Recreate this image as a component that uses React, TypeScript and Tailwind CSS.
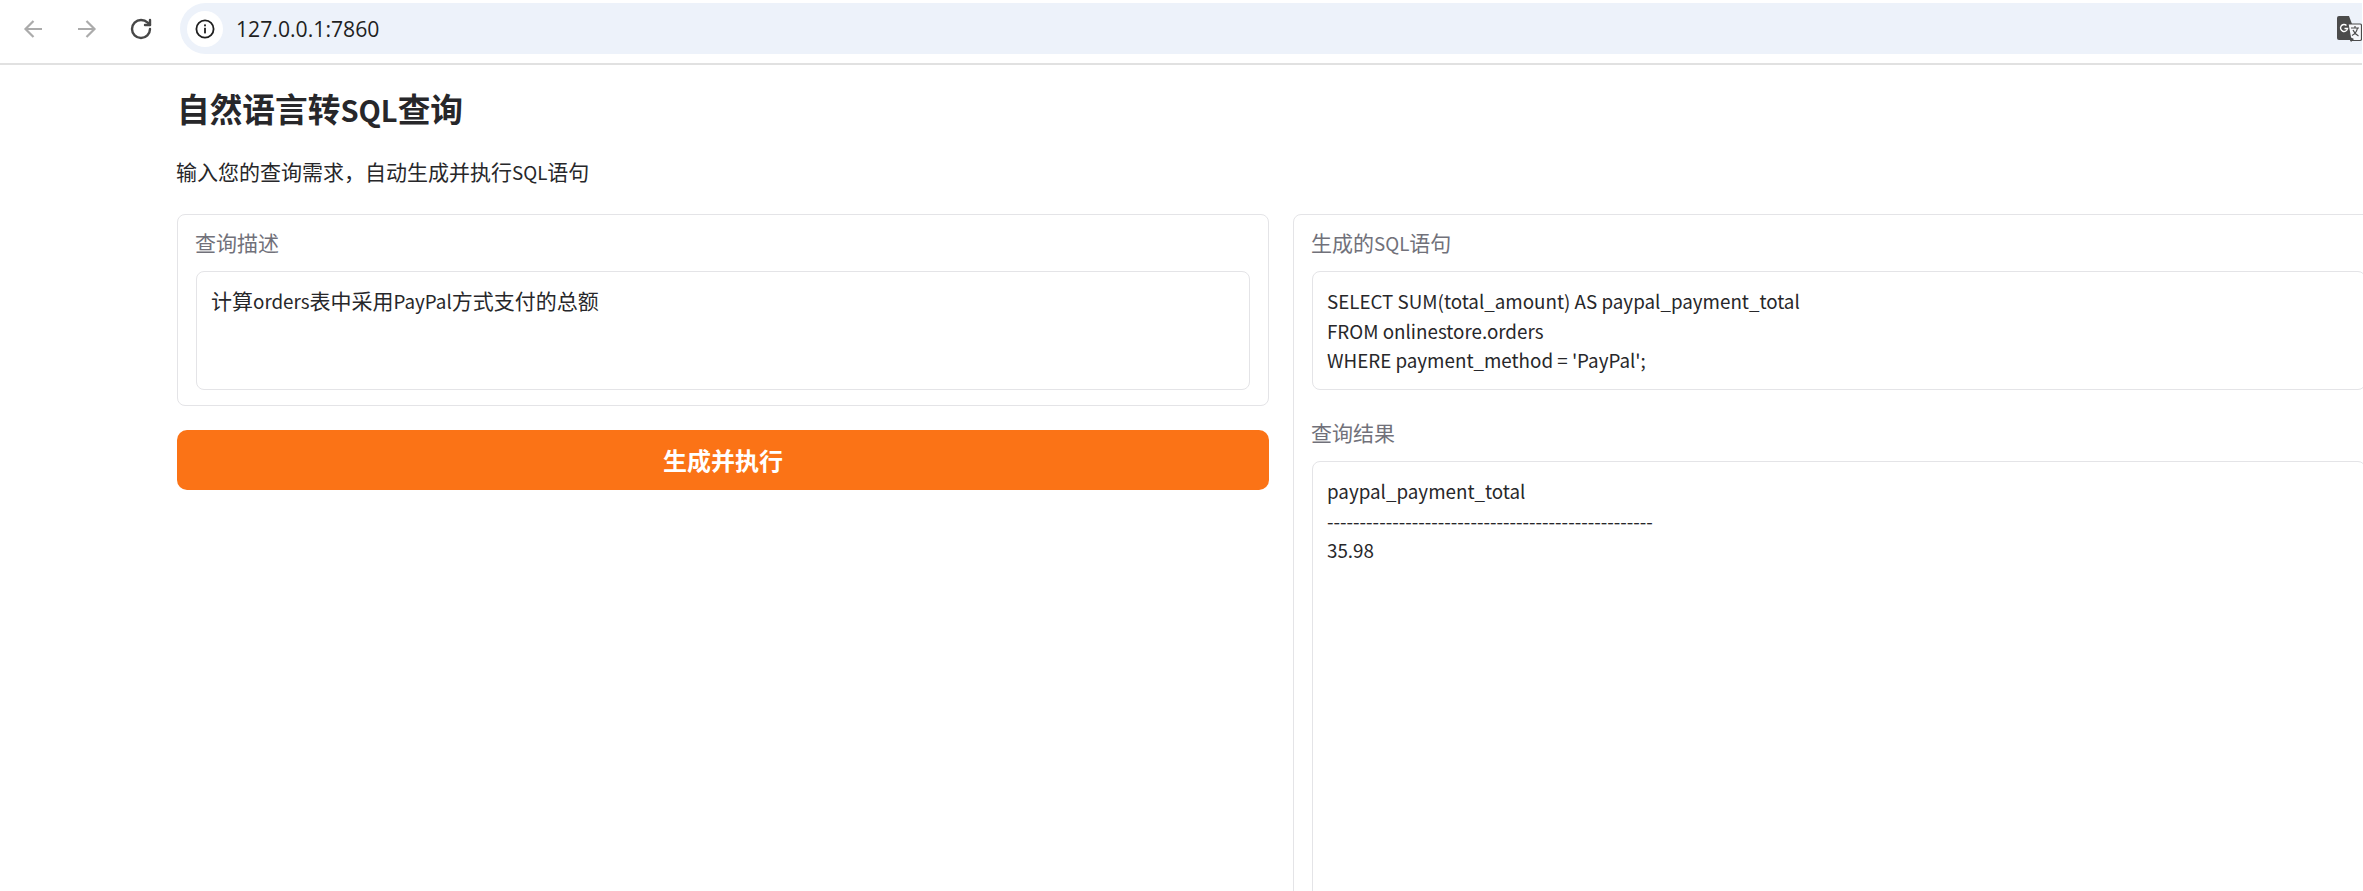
import React from "react";
import { RotateCw } from "lucide-react";

// latin runs sit in a smaller size, the CJK font draws them wider than the page's own latin face
function Mixed({ text, latin = "text-[18.8px]" }: { text: string; latin?: string }) {
  const parts = text.split(/([\x20-\x7e]+)/).filter(Boolean);
  return (
    <>
      {parts.map((part, i) =>
        /^[\x20-\x7e]+$/.test(part) ? (
          <span key={i} className={latin}>{part}</span>
        ) : (
          <span key={i}>{part}</span>
        )
      )}
    </>
  );
}

function NavArrow({ flip }: { flip?: boolean }) {
  return (
    <svg width="20" height="20" viewBox="0 0 20 20" fill="none" className={flip ? "-scale-x-100" : ""}>
      <path d="M19 10H3M10.500 2L2.500 10l8 8" stroke="#ababab" strokeWidth="2.200" />
    </svg>
  );
}

function TranslateIcon() {
  return (
    <svg width="25" height="26" viewBox="0 0 25 26" className="shrink-0">
      <path d="M2 0h10l9 24H2a2 2 0 0 1-2-2V2a2 2 0 0 1 2-2z" fill="#4b4b4b" />
      <path d="M11 8h12a1.500 1.500 0 0 1 1.500 1.500V23a1.500 1.500 0 0 1-1.500 1.500h-9z" fill="#f6f7fa" stroke="#4b4b4b" strokeWidth="1.200" />
      <path d="M11 20l3 6 3-3z" fill="#4b4b4b" />
      <path d="M9.500 9.500a3.500 3.500 0 1 0 1 3H7.500" fill="none" stroke="#fff" strokeWidth="1.400" />
      <path d="M14 12h8M18 10v2M20.500 12c-.6 3-2.600 6-5.500 7.500M16 14c1 2.500 3 4.500 5.500 6" fill="none" stroke="#4b4b4b" strokeWidth="1.200" />
    </svg>
  );
}

function InfoIcon() {
  return (
    <svg width="20" height="20" viewBox="0 0 20 20" fill="none">
      <circle cx="10" cy="10" r="8.600" stroke="#1f1f1f" strokeWidth="1.800" />
      <rect x="9.100" y="8.800" width="1.800" height="5.600" fill="#1f1f1f" />
      <rect x="9.100" y="5.400" width="1.800" height="1.900" fill="#1f1f1f" />
    </svg>
  );
}

function BrowserBar() {
  return (
    <div className="flex h-[65px] w-[2362px] items-start border-b-2 border-[#e1e1e1] bg-white">
      <div className="mt-[17px] flex h-[24px] w-[180px] items-center pl-[23px]">
        <NavArrow />
        <div className="ml-[34px]"><NavArrow flip /></div>
        <RotateCw size={24} strokeWidth={2.400} className="ml-[32px] text-[#474747]" />
      </div>
      <div className="mt-[3px] flex h-[51px] flex-1 items-center rounded-l-[26px] bg-[#edf2fa] pl-[7px]">
        <div className="flex h-[36px] w-[36px] items-center justify-center rounded-full bg-white">
          <InfoIcon />
        </div>
        <span className="ml-[13px] font-['Open_Sans',sans-serif] text-[21.200px] text-[#1f1f1f]">127.0.0.1:7860</span>
        <div className="ml-auto"><TranslateIcon /></div>
      </div>
    </div>
  );
}

function Field({ label, lines, height }: { label: string; lines: string[]; height: string }) {
  return (
    <div>
      <div className="-ml-px h-[56px] pt-[12px] text-[21px] leading-[30px] text-[#71717a]">
        <Mixed text={label} />
      </div>
      <div className={`${height} rounded-[8px] border border-[#e4e4e7] bg-white px-[14px] py-[14px] text-[21px] leading-[29.500px] text-[#27272a]`}>
        {lines.map((line) => (
          <div key={line} className="whitespace-pre">
            <Mixed text={line} />
          </div>
        ))}
      </div>
    </div>
  );
}

export default function App() {
  return (
    <div className="h-[891px] w-[2363px] overflow-hidden bg-white font-['Noto_Sans_CJK_SC',sans-serif]">
      <BrowserBar />
      <main className="w-[2208px] pl-[177px]">
        <h1 className="pt-[23px] text-[32.700px] leading-[40px] font-bold text-[#27272a]">
          <Mixed text="自然语言转SQL查询" latin="text-[29px] font-semibold" />
        </h1>
        <p className="-ml-px mt-[27px] text-[21px] leading-[30px] text-[#27272a]">
          <Mixed text="输入您的查询需求，自动生成并执行SQL语句" />
        </p>
        <div className="mt-[27px] flex gap-[24px]">
          <div className="w-[1092px] shrink-0">
            <div className="h-[192px] rounded-[8px] border border-[#e4e4e7] px-[18px]">
              <Field label="查询描述" lines={["计算orders表中采用PayPal方式支付的总额"]} height="h-[119px]" />
            </div>
            <button className="mt-[24px] flex h-[60px] w-full items-center justify-center rounded-[10px] bg-[#fb7316] text-[24px] font-bold text-white">
              生成并执行
            </button>
          </div>
          <div className="h-[800px] w-[1092px] shrink-0 rounded-[8px] border border-[#e4e4e7] px-[18px]">
            <Field
              label="生成的SQL语句"
              lines={["SELECT SUM(total_amount) AS paypal_payment_total", "FROM onlinestore.orders", "WHERE payment_method = 'PayPal';"]}
              height="h-[119px]"
            />
            <div className="mt-[15px]">
              <Field
                label="查询结果"
                lines={["paypal_payment_total", "--------------------------------------------------", "35.98"]}
                height="h-[600px]"
              />
            </div>
          </div>
        </div>
      </main>
    </div>
  );
}
